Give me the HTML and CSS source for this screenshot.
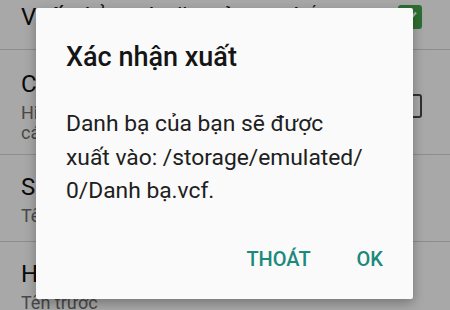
FILE: index.html
```html
<!DOCTYPE html>
<html lang="vi">
<head>
<meta charset="utf-8">
<link rel="stylesheet" href="styles.css">
</head>
<body>
<div class="screen">
  <div class="list">
    <div class="row row-first">
      <div class="text">
        <div class="title">Vuốt để gọi hoặc gửi tin nhắn</div>
      </div>
      <div class="check on">
        <svg viewBox="0 0 24 24" width="24" height="24"><path d="M6 12.5l4 4 8-9" fill="none" stroke="#fff" stroke-width="2.4"/></svg>
      </div>
    </div>
    <div class="row row-two">
      <div class="text">
        <div class="title">Chỉ danh bạ có số điện thoại</div>
        <div class="sub">Hiển thị danh bạ có số điện thoại trong<br>các danh sách liên hệ</div>
      </div>
      <div class="check off"></div>
    </div>
    <div class="row">
      <div class="text">
        <div class="title">Sắp xếp theo</div>
        <div class="sub">Tên trước</div>
      </div>
    </div>
    <div class="row">
      <div class="text">
        <div class="title">Hiển thị tên</div>
        <div class="sub">Tên trước</div>
      </div>
    </div>
  </div>
  <div class="scrim"></div>
  <div class="dialog">
    <div class="d-title">Xác nhận xuất</div>
    <div class="d-body">Danh bạ của bạn sẽ được<br>xuất vào: /storage/emulated/<br>0/Danh bạ.vcf.</div>
    <div class="d-actions">
      <span class="btn">THOÁT</span>
      <span class="btn">OK</span>
    </div>
  </div>
</div>
</body>
</html>
```
FILE: styles.css
```css
html, body {
  margin: 0;
  padding: 0;
}
body {
  font-family: Roboto, "Noto Sans", sans-serif;
  background: #ffffff;
}
.screen {
  position: relative;
  width: 450px;
  height: 310px;
  overflow: hidden;
  background: #ffffff;
}
.list {
  display: flex;
  flex-direction: column;
}
.row {
  display: flex;
  align-items: center;
  padding: 17px 28px 15px 21px;
  border-bottom: 1px solid #d6d6d6;
}
.row-first {
  padding-top: 2px;
  padding-bottom: 17px;
}
.row-two {
  padding-top: 19px;
  padding-bottom: 11px;
}
.text {
  flex: 1;
  min-width: 0;
  white-space: nowrap;
  overflow: hidden;
}
.title {
  font-size: 24px;
  line-height: 30px;
  color: #111;
}
.sub {
  margin-top: 4px;
  font-size: 18px;
  line-height: 20px;
  color: #707070;
}
.check {
  width: 24px;
  height: 24px;
  box-sizing: border-box;
  border-radius: 3px;
  flex: none;
}
.check.on {
  background: #45a84b;
}
.check.off {
  border: 2.5px solid #4a4a4a;
}
.check svg {
  display: block;
}
.scrim {
  position: absolute;
  inset: 0;
  background: rgba(0, 0, 0, 0.34);
}
.dialog {
  position: absolute;
  left: 36px;
  top: 8px;
  width: 377px;
  height: 291px;
  box-sizing: border-box;
  padding: 33px 30px 0 30px;
  background: #fafafa;
  border-radius: 2px;
  box-shadow: 0 4px 12px rgba(0, 0, 0, 0.3);
  display: flex;
  flex-direction: column;
}
.d-title {
  font-size: 27px;
  line-height: 32px;
  font-weight: 500;
  color: #151515;
}
.d-body {
  margin-top: 34px;
  font-size: 22.8px;
  line-height: 33.5px;
  color: #202020;
}
.d-actions {
  margin-top: 39px;
  display: flex;
  justify-content: flex-end;
  gap: 46px;
}
.btn {
  font-size: 20px;
  line-height: 24px;
  font-weight: 500;
  color: #1b8a7c;
}
```
